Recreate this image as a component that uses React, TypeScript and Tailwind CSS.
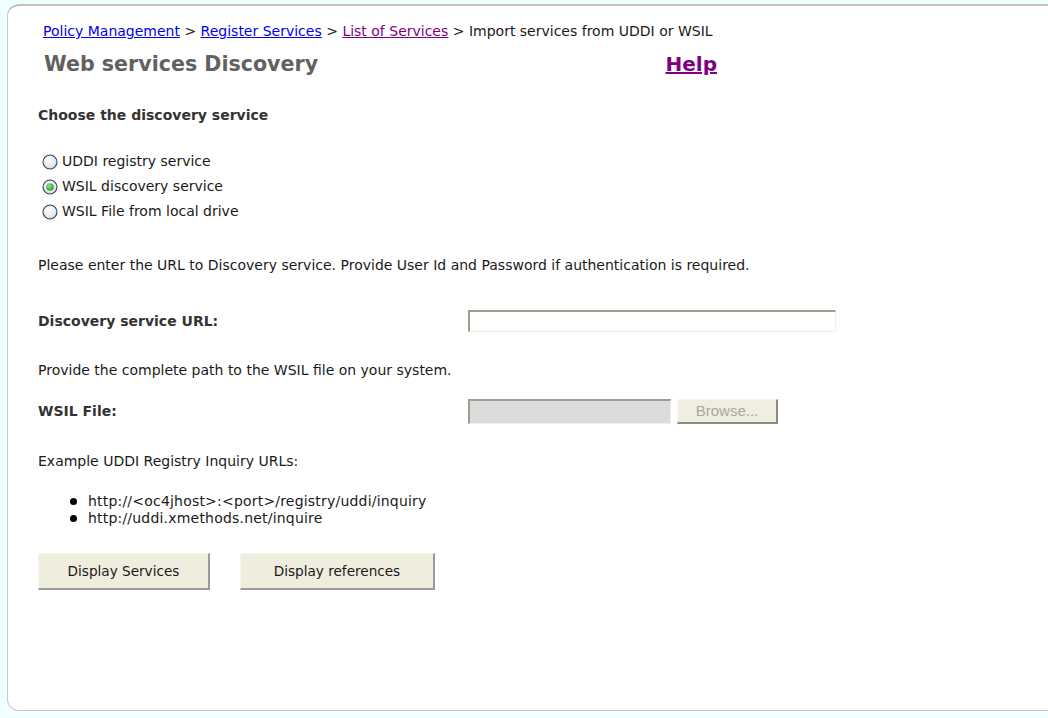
import React from "react";

function Radio({ checked }: { checked?: boolean }) {
  return (
    <svg width="16" height="16" viewBox="0 0 16 16" className="shrink-0">
      <defs>
        <radialGradient id={checked ? "rg1" : "rg0"} cx="40%" cy="35%" r="70%">
          <stop offset="0%" stopColor="#ffffff" />
          <stop offset="100%" stopColor="#dcdcd6" />
        </radialGradient>
        <radialGradient id="dot" cx="40%" cy="35%" r="70%">
          <stop offset="0%" stopColor="#8de88d" />
          <stop offset="100%" stopColor="#1d9a1d" />
        </radialGradient>
      </defs>
      <circle cx="8" cy="8" r="7" fill={`url(#${checked ? "rg1" : "rg0"})`} stroke="#2a4866" strokeWidth="1.1" />
      {checked && <circle cx="8" cy="8" r="3.8" fill="url(#dot)" />}
    </svg>
  );
}

function Bullet({ children }: { children: React.ReactNode }) {
  return (
    <div className="flex items-center h-[17px]">
      <span className="ml-[32px] w-[7px] h-[7px] rounded-full bg-black shrink-0" />
      <span className="ml-[11px] tracking-[0.2px]">{children}</span>
    </div>
  );
}

export default function App() {
  return (
    <div className="w-full h-[718px] bg-[#f0ffff] pt-[4px] pl-[7px] overflow-hidden font-['Verdana','DejaVu_Sans',sans-serif] text-[14px] text-[#1a1a1a]">
      <div className="h-[707px] bg-white border-t-2 border-b border-l border-t-[#c0c0c0] border-b-[#c4c4c4] border-l-[#c4cccc] rounded-l-[12px] pl-[30px]">
        <div className="ml-[5px] w-[680px] pt-[17px] leading-[16px] whitespace-nowrap">
          <a href="#" className="text-[#0000ee] underline">Policy Management</a>
          <span> &gt; </span>
          <a href="#" className="text-[#0000ee] underline">Register Services</a>
          <span> &gt; </span>
          <a href="#" className="text-[#800080] underline">List of Services</a>
          <span> &gt; Import services from UDDI or WSIL</span>
        </div>
        <div className="ml-[6px] w-[673px] mt-[14px] flex items-center leading-[22px]">
          <h1 className="text-[20.6px] font-bold text-[#616161]">Web services Discovery</h1>
          <a href="#" className="ml-auto text-[20px] font-bold text-[#800080] underline">Help</a>
        </div>

        <div className="mt-[32px] leading-[16px] font-bold text-[#333]">Choose the discovery service</div>

        <div className="mt-[26px]">
          <div className="h-[25px] flex items-center gap-[4px] pl-[4px]">
            <Radio />
            <span>UDDI registry service</span>
          </div>
          <div className="h-[25px] flex items-center gap-[4px] pl-[4px]">
            <Radio checked />
            <span>WSIL discovery service</span>
          </div>
          <div className="h-[25px] flex items-center gap-[4px] pl-[4px]">
            <Radio />
            <span>WSIL File from local drive</span>
          </div>
        </div>

        <div className="mt-[33px] leading-[16px]">
          Please enter the URL to Discovery service. Provide User Id and Password if authentication is required.
        </div>

        <div className="mt-[37px] h-[22px] flex items-center">
          <div className="w-[430px] font-bold text-[#333]">Discovery service URL:</div>
          <div className="w-[368px] h-[22px] bg-white border-t-2 border-l-2 border-r border-b border-t-[#9e9e8c] border-l-[#9e9e8c] border-r-[#f3ede4] border-b-[#f3ede4]" />
        </div>

        <div className="mt-[30px] leading-[16px]">Provide the complete path to the WSIL file on your system.</div>

        <div className="mt-[21px] h-[25px] flex items-center">
          <div className="w-[430px] font-bold text-[#333]">WSIL File:</div>
          <div className="w-[203px] h-[25px] bg-[#dcdcdc] border-t-2 border-l-2 border-r border-b border-t-[#9e9e8c] border-l-[#9e9e8c] border-r-[#f3ede4] border-b-[#f3ede4]" />
          <div className="ml-[6px] w-[101px] h-[25px] bg-[#efeee0] border-t border-l border-r-2 border-b-2 border-t-[#f5f5ee] border-l-[#f5f5ee] border-r-[#8a8a80] border-b-[#8a8a80] flex items-center justify-center font-['Liberation_Sans',sans-serif] text-[15px] text-[#a8a8a0]">
            Browse...
          </div>
        </div>

        <div className="mt-[29px] leading-[16px]">Example UDDI Registry Inquiry URLs:</div>

        <div className="mt-[24px] leading-[17px]">
          <Bullet>http://&lt;oc4jhost&gt;:&lt;port&gt;/registry/uddi/inquiry</Bullet>
          <Bullet>http://uddi.xmethods.net/inquire</Bullet>
        </div>

        <div className="mt-[26px] flex gap-[30px]">
          <button className="w-[172px] h-[37px] pt-[1px] bg-[#efedde] border-t border-l border-r-2 border-b-2 border-t-[#f7f5ee] border-l-[#f7f5ee] border-r-[#9a9a9a] border-b-[#9a9a9a] text-[13.6px] text-[#1a1a1a]">
            Display Services
          </button>
          <button className="w-[195px] h-[37px] pt-[1px] bg-[#efedde] border-t border-l border-r-2 border-b-2 border-t-[#f7f5ee] border-l-[#f7f5ee] border-r-[#9a9a9a] border-b-[#9a9a9a] text-[13.6px] text-[#1a1a1a]">
            Display references
          </button>
        </div>
      </div>
    </div>
  );
}
